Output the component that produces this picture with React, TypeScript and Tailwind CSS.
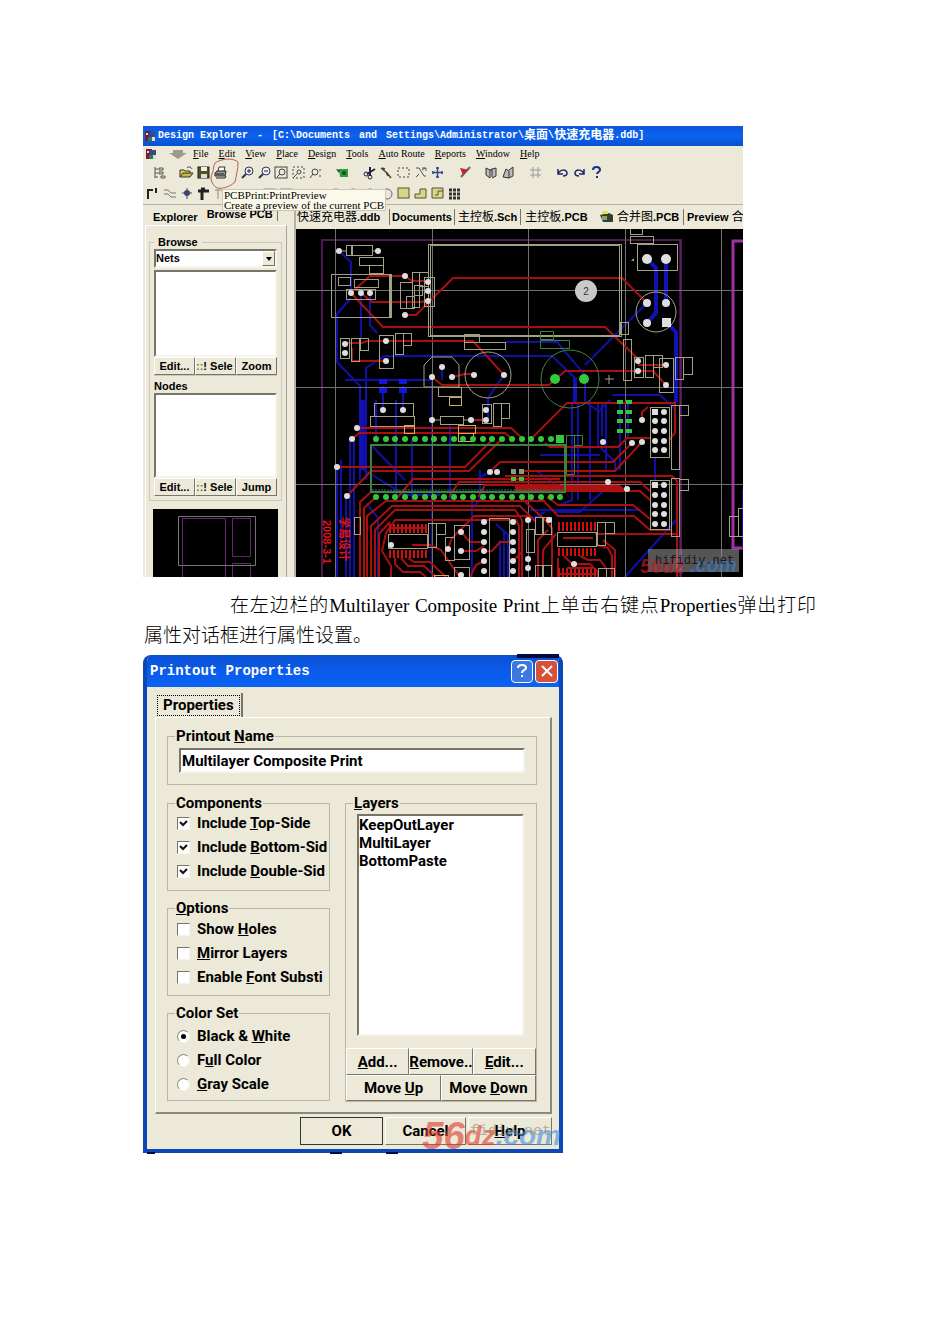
import { Fragment, useState } from 'react'
import type { ReactNode } from 'react'
import clsx from 'clsx'

type Point = [number, number]
type Box = [number, number, number, number]

const raised = 'border border-t-white border-l-white border-r-[#77756a] border-b-[#77756a] bg-[#ece9d8]'
const sunken = 'border-2 border-t-[#77756a] border-l-[#77756a] border-r-[#f6f4ec] border-b-[#f6f4ec] bg-white'

/* ---------- toolbar icons ---------- */

const icons: Record<string, ReactNode> = {
  tree: <path d="M3 2v11M3 4h3M3 8h3M3 12h3M7 3h4v2H7zM7 7h4v2H7zM9 11h4v2H9z" stroke="#555" fill="none" />,
  open: (
    <>
      <path d="M1 12V5h4l1 1h5v2" fill="#e0d060" stroke="#333" />
      <path d="M1 12l3-4h10l-3 4z" fill="#c8b840" stroke="#333" />
      <path d="M8 3c2-2 4-1 5 1" stroke="#333" fill="none" />
    </>
  ),
  save: (
    <>
      <rect x="2" y="2" width="11" height="11" fill="#55531c" stroke="#222" />
      <rect x="5" y="2" width="6" height="4" fill="#eee" />
      <rect x="5" y="9" width="6" height="4" fill="#ddd" />
    </>
  ),
  print: (
    <>
      <path d="M5 6l1-4h6l-1 4" fill="#fff" stroke="#333" />
      <path d="M2 8l2-2h9l-1 5H2z" fill="#999" stroke="#222" />
      <path d="M3 13h9l1-2M3 9h8" stroke="#222" fill="none" />
    </>
  ),
  zoomIn: (
    <>
      <circle cx="9" cy="6" r="4" fill="#eef" stroke="#335" />
      <path d="M6 9l-4 4" stroke="#335" strokeWidth="2" />
      <path d="M7 6h4M9 4v4" stroke="#223" />
    </>
  ),
  zoomOut: (
    <>
      <circle cx="9" cy="6" r="4" fill="#eef" stroke="#335" />
      <path d="M6 9l-4 4" stroke="#335" strokeWidth="2" />
      <path d="M7 6h4" stroke="#223" />
    </>
  ),
  zoomPage: (
    <>
      <rect x="1" y="2" width="12" height="11" fill="none" stroke="#444" />
      <circle cx="8" cy="7" r="3" fill="none" stroke="#444" />
      <path d="M6 9l-3 3" stroke="#444" />
    </>
  ),
  zoomArea: (
    <>
      <rect x="2" y="2" width="11" height="11" fill="none" stroke="#444" strokeDasharray="2 2" />
      <circle cx="8" cy="7" r="2" fill="none" stroke="#444" />
      <path d="M6 9l-4 4" stroke="#444" />
    </>
  ),
  zoomPoint: (
    <>
      <circle cx="7" cy="7" r="3" fill="none" stroke="#444" />
      <path d="M5 9l-3 4M12 4v2M12 10v2" stroke="#444" />
    </>
  ),
  chip: (
    <>
      <path d="M4 4h9v8H5z" fill="#2c9c3c" />
      <path d="M1 4l4 1-1 3z" fill="#124d18" />
      <circle cx="9" cy="8" r="2" fill="#124d18" />
    </>
  ),
  cut: (
    <>
      <path d="M13 4L5 9M8 2v9" stroke="#224" strokeWidth="2" />
      <circle cx="4" cy="9" r="2" fill="none" stroke="#224" />
      <circle cx="8" cy="12" r="2" fill="none" stroke="#224" />
    </>
  ),
  paste: <path d="M2 3l6 5 4 5M3 3l3 1M7 7l2 4" stroke="#443" strokeWidth="1.5" fill="none" />,
  select: <rect x="2" y="3" width="11" height="9" fill="none" stroke="#444" strokeDasharray="2 2" />,
  deselect: <path d="M3 3h3l5 8h2M3 12l3-3M9 5l3-2M9 3h4v3" stroke="#555" fill="none" />,
  move: <path d="M7.5 2v11M2 7.5h11M6 3h3M6 12h3M3 6v3M12 6v3" stroke="#35478f" strokeWidth="1.5" />,
  wizard: (
    <>
      <path d="M13 2L4 12" stroke="#666" strokeWidth="2" />
      <path d="M3 3l5 1 3 1-5 5z" fill="#c22" />
    </>
  ),
  library: <path d="M2 3l4 2v8L2 10zM6 5l2-1v8M8 4l4-1v8l-4 2" stroke="#333" fill="#bbb" />,
  books: <path d="M2 12l3-8 3 2v7zM8 5l4-3v9l-4 2" stroke="#333" fill="#bbb" />,
  grid: <path d="M5 2v11M10 2v11M2 5h11M2 10h11" stroke="#999" />,
  undo: <path d="M3 4v5h5M3 9c2-5 9-5 9-1 0 2-2 3-4 3" stroke="#226" strokeWidth="1.5" fill="none" />,
  redo: <path d="M12 4v5H7M12 9C10 4 3 4 3 8c0 2 2 3 4 3" stroke="#226" strokeWidth="1.5" fill="none" />,
  help: <path d="M4 5c0-4 7-4 7 0 0 2-3 2-3 4M8 11v2" stroke="#1c2c88" strokeWidth="2" fill="none" />,
  track: <path d="M3 13V4h5M11 2v5" stroke="#222" strokeWidth="2" fill="none" />,
  wave: <path d="M2 4h4l3 3h5M2 8h4l3 3h5" stroke="#777" fill="none" />,
  via: (
    <>
      <path d="M8 2v11M3 7h10" stroke="#446" />
      <circle cx="8" cy="7" r="3" fill="#3a4478" />
    </>
  ),
  pad: <path d="M2 5h11M6 5v9M5 3h4" stroke="#222" strokeWidth="3" />,
  text: <path d="M2 4h8M5 4v9" stroke="#888" />,
  line: <path d="M2 12L13 3" stroke="#888" />,
  box: <rect x="2" y="3" width="11" height="9" fill="none" stroke="#888" />,
  dots: <path d="M2 4h3M7 4h3M12 4h2M2 8h12" stroke="#888" />,
  arc: <circle cx="8" cy="8" r="5" fill="none" stroke="#667" />,
  fill: <rect x="2" y="2" width="11" height="10" fill="#d8d68c" stroke="#55532c" />,
  polygon: <path d="M2 12V8h5V3h6v9z" fill="#d8d68c" stroke="#55532c" />,
  plane: <path d="M2 2h11v10H2zM5 9h3V5h5" fill="#d8d68c" stroke="#55532c" />,
  array: <path d="M2 4h11M2 8h11M2 12h11" stroke="#333" strokeWidth="3" strokeDasharray="3 1" />,
}

const topRow = [
  ['tree'],
  ['open', 'save', 'print'],
  ['zoomIn', 'zoomOut', 'zoomPage', 'zoomArea', 'zoomPoint'],
  ['chip'],
  ['cut', 'paste', 'select', 'deselect', 'move'],
  ['wizard'],
  ['library', 'books'],
  ['grid'],
  ['undo', 'redo', 'help'],
]

const bottomRow = [
  ['track', 'wave', 'via', 'pad', 'text'],
  ['line', 'box', 'box'],
  ['dots', 'arc', 'arc', 'arc', 'arc', 'fill', 'polygon', 'plane', 'array'],
]

function ToolRow({ groups, className }: { groups: string[][]; className: string }) {
  return (
    <div className={clsx('flex items-center h-[21px]', className)}>
      {groups.map((group, i) => (
        <div key={i} className="flex">
          {group.map((name, j) => (
            <button key={j} type="button" aria-label={name} className="w-[17px] h-[17px] flex items-center justify-center">
              <svg viewBox="0 0 15 15" className="w-[15px] h-[15px]">
                {icons[name]}
              </svg>
            </button>
          ))}
        </div>
      ))}
    </div>
  )
}

/* ---------- board drawing ---------- */

const white: Point[] = [
  [339, 251], [378, 251], [351, 293], [361, 293], [370, 293], [405, 276], [405, 315],
  [428, 282], [428, 291], [428, 301], [345, 344], [345, 353], [386, 341], [386, 361],
  [442, 367], [432, 377], [452, 377], [474, 375], [504, 375], [638, 361], [638, 371],
  [666, 365], [666, 385], [383, 410], [403, 410], [432, 420], [471, 420], [486, 410],
  [486, 420], [357, 428], [352, 439], [337, 467], [347, 496], [490, 472], [497, 472],
  [603, 442], [632, 443], [642, 442], [642, 420], [608, 482], [627, 489], [391, 545],
  [461, 532], [461, 551], [448, 549], [461, 575], [528, 520], [549, 520], [528, 559],
  [528, 568], [574, 564],
  [484, 522], [484, 532], [484, 542], [484, 551], [484, 561], [484, 571],
  [513, 522], [513, 532], [513, 542], [513, 551], [513, 561], [513, 571],
  [664, 412], [655, 421], [664, 421], [655, 431], [664, 431], [655, 441], [664, 441], [655, 450], [664, 450],
  [664, 485], [655, 495], [664, 495], [655, 505], [664, 505], [655, 514], [664, 514], [655, 524], [664, 524],
]

const outlines: Box[] = [
  [346, 245, 26, 10], [351, 245, 1, 10], [359, 257, 24, 8], [369, 265, 14, 8], [331, 274, 60, 43],
  [389, 275, 1, 41], [338, 277, 12, 8], [354, 279, 24, 8], [346, 289, 29, 10], [400, 282, 12, 26],
  [412, 272, 7, 35], [419, 272, 9, 14], [406, 296, 8, 12], [414, 285, 8, 10], [424, 277, 10, 29],
  [428, 244, 193, 92], [430, 245, 189, 90], [340, 338, 9, 20], [351, 338, 8, 23], [360, 338, 8, 12],
  [379, 335, 14, 33], [395, 333, 8, 21], [403, 333, 8, 12], [464, 334, 15, 8], [464, 342, 41, 7],
  [438, 387, 23, 9], [637, 244, 40, 26], [630, 236, 23, 7], [630, 228, 12, 6], [620, 322, 8, 12],
  [623, 339, 8, 41], [634, 357, 9, 20], [645, 355, 8, 22], [653, 355, 9, 12], [659, 358, 14, 34],
  [675, 357, 8, 22], [683, 357, 9, 17], [374, 403, 39, 13], [370, 416, 44, 10], [440, 416, 23, 8],
  [482, 404, 9, 19], [493, 403, 8, 23], [501, 403, 8, 15], [650, 407, 19, 50], [671, 405, 8, 64],
  [679, 405, 9, 10], [650, 480, 19, 49], [671, 478, 8, 58], [679, 479, 9, 11], [388, 534, 39, 14],
  [428, 523, 8, 24], [436, 523, 9, 11], [454, 525, 15, 34], [445, 537, 9, 23], [454, 567, 15, 12],
  [489, 518, 20, 62], [354, 517, 6, 17], [557, 532, 39, 14], [597, 522, 8, 23], [605, 522, 9, 11],
  [535, 517, 7, 17], [543, 517, 8, 17], [526, 529, 8, 23], [535, 565, 7, 14], [543, 565, 8, 14],
  [598, 568, 8, 12], [606, 568, 8, 12], [729, 516, 9, 20], [738, 508, 8, 28],
]

const yellow: Box[] = [
  [449, 397, 12, 8], [404, 425, 10, 8], [458, 425, 17, 8], [458, 433, 15, 8], [434, 575, 14, 6],
]

const redTracks = [
  'M405 276H370L351 293', 'M405 276L412 281H424', 'M361 293L372 302H420L428 301',
  'M351 293L383 327H605L638 359', 'M405 315H416L453 278H622L647 303',
  'M345 343H362L367 341H473L504 375', 'M352 348V361H386', 'M452 377L465 374H474',
  'M432 377L442 385H549L565 371H653L666 385', 'M638 365H666', 'M471 420H486',
  'M357 428H511L524 440', 'M352 439L359 433H505L512 439', 'M337 467H465L492 440',
  'M347 496L371 471H469L500 441', 'M398 497L413 479H560', 'M449 497L459 482H560',
  'M478 497L485 485H560', 'M490 472L500 462H613L632 443', 'M521 471H615L642 442',
  'M533 437L567 403H675V433L669 440', 'M545 443L550 447H618L627 438H650', 'M642 420V412L648 407',
  'M505 476H672L677 481V577', 'M560 482H640L650 491', 'M627 491H640L650 500',
  'M547 497L558 505H633L650 519', 'M540 497L558 516H634L650 530H672', 'M520 497L545 520L552 528V577',
  'M595 534H678', 'M360 577V502L371 492H385', 'M364 577V508L376 497', 'M367 577V516L386 501H545',
  'M371 577V526L392 506H520L536 522', 'M375 577V530L395 510H515L522 520V577',
  'M379 577V534L390 522', 'M382 551L386 533L395 520H516L519 526V577',
  'M382 551L391 566V577', 'M395 558V564L403 572H420L426 577', 'M401 558L408 566H424L436 577',
  'M408 558L414 562H430L446 577', 'M412 545H430L441 550L452 566L460 577',
  'M448 549L452 538L474 516H530', 'M461 532L470 542H484', 'M461 551H476L484 546',
  'M484 551H492L500 542H513', 'M470 577L476 565L484 561', 'M513 561L522 552',
  'M538 577V540L548 530', 'M543 577V550L556 534', 'M558 558V577', 'M564 556L572 564H590L598 572V577',
  'M580 556L588 560H600L606 568', 'M597 545L608 548L612 556V577', 'M603 540L615 550V577',
]

const blueTracks = [
  'M339 251L351 262V293', 'M351 298L337 314V362L360 386V480', 'M370 293V325L377 333',
  'M361 293V338', 'M366 480V368L385 356H552L575 378V402', 'M505 342H557L585 375V402',
  'M345 380H432V577', 'M442 367V380', 'M504 375L488 398V420', 'M383 386V410', 'M403 386V410',
  'M376 400V440', 'M396 400V500', 'M412 440V500', 'M364 400V470L405 495H440', 'M337 467V577',
  'M341 460V540', 'M346 498V577', 'M350 440V577', 'M354 440V577', 'M366 503L378 518V577',
  'M450 425V500', 'M472 500V577', 'M480 470V500L470 510', 'M490 472L475 480', 'M500 540V577',
  'M504 530V577', 'M496 524L508 535V577', 'M647 303L585 365', 'M598 402V445L615 462V470',
  'M602 402V436', 'M606 402V470', 'M610 400L600 410', 'M612 395H660L676 410', 'M585 402L600 412',
  'M578 402V500', 'M572 402V500L560 505', 'M590 400V500', 'M620 402V470', 'M628 402V437',
  'M655 457V480', 'M610 485L580 512H555', 'M535 470L556 485H600', 'M676 520L625 577',
  'M540 455H600', 'M530 510H640', 'M545 512L530 520', 'M743 490V548', 'M371 445L405 480',
]

function teeth(x: number, y: number, count: number, length: number) {
  let d = ''
  for (let i = 0; i < count; i++) d += `M${x + i * 4} ${y}v${length}`
  return d
}

function Rects({ boxes, stroke }: { boxes: Box[]; stroke: string }) {
  return (
    <g fill="none" stroke={stroke}>
      {boxes.map(([x, y, w, h], i) => (
        <rect key={i} x={x + 0.5} y={y + 0.5} width={w} height={h} />
      ))}
    </g>
  )
}

function Board() {
  const pins = Array.from({ length: 20 }, (_, i) => Math.round(376 + i * 9.7))

  return (
    <svg viewBox="296 229 447 348" preserveAspectRatio="xMinYMin slice" role="img" aria-label="PCB" className="block w-full h-[348px] bg-black">
      {/* Board edges */}
      <path d="M322 577V240H681V577" fill="none" stroke="#4d1a50" strokeWidth="2" />
      <path d="M680 240V577" stroke="#7b2280" />
      <path d="M745 241H733V548H745" fill="none" stroke="#a02ea6" strokeWidth="3" />

      <g fill="none" stroke="#1010a8" strokeWidth="2">
        {blueTracks.map((d) => <path key={d} d={d} />)}
      </g>
      <g fill="none" stroke="#1212b4" strokeWidth="4">
        <path d="M647 259L656 268V313L647 323M666 259V303M666 322L676 332V402M575 378V402M361 400V470" />
      </g>
      <path d="M379 379h8v5h-8zM399 379h8v5h-8zM379 388h8v5h-8zM399 388h8v5h-8z" fill="#1515e0" />

      {/* Reference grid */}
      <path
        d="M335.500 229V577M432.500 229V577M528.500 229V577M625.500 229V577M721.500 229V577M296 290.500H743M296 387.500H743M296 484.500H743"
        stroke="#70706c"
      />

      <g fill="none" stroke="#a81010" strokeWidth="2">
        {redTracks.map((d) => <path key={d} d={d} />)}
      </g>
      <path d="M515 485H620L628 492H515z" fill="#b01010" />
      <g stroke="#d01010" strokeWidth="2">
        <path d={teeth(390, 524, 10, 9)} />
        <path d={teeth(390, 550, 10, 8)} />
        <path d={teeth(559, 522, 10, 9)} />
        <path d={teeth(559, 548, 10, 8)} />
        <path d={teeth(559, 568, 10, 9)} />
      </g>
      <path d="M390 528h36M567 568h26M560 574h34M563 538h30" stroke="#b01010" strokeWidth="2" />

      <Rects boxes={outlines} stroke="#a3a184" />
      <Rects boxes={yellow} stroke="#c8b060" />
      <g fill="none" stroke="#a3a184">
        <path d="M424 387V365L432 357H452L459 365V387z" />
        <circle cx="488" cy="375" r="23" />
        <circle cx="656" cy="312" r="20" />
        <path d="M339 251h7M372 251h6M432 420h8M463 420h8M605 379h9M609 375v9" />
      </g>

      {/* Main socket and its pins */}
      <g fill="none" stroke="#3f8240">
        <path d="M371 445H565V492H371z" strokeWidth="2" />
        <path d="M372 490H565" stroke="#2c7470" strokeDasharray="2 1" />
        <circle cx="570" cy="379" r="29" />
        <path d="M540.500 331.500h13v8h-13zM540.500 340.500h29v8h-29zM566.500 435.500h8v39h-8zM574.500 435.500h8v10h-8z" />
      </g>
      <g fill="#35c83c">
        {pins.map((x, i) => (
          <Fragment key={x}>
            {i < 19 && <circle cx={x} cy="439" r="3" />}
            <circle cx={x} cy="497" r="3" />
          </Fragment>
        ))}
        <rect x="556" y="435" width="8" height="8" />
        <circle cx="555" cy="379" r="5" />
        <circle cx="584" cy="379" r="5" />
        {[402, 412, 421, 431].map((y) => (
          <path key={y} d={`M617 ${y - 2}h6v4h-6zM626 ${y - 2}h6v4h-6z`} />
        ))}
        <path d="M511 477h5v4h-5zM519 477h5v4h-5z" />
      </g>
      <path d="M511 469h5v5h-5zM519 469h5v5h-5z" fill="#8d9a80" />

      <g fill="#dedede">
        {white.map(([x, y]) => <circle key={`${x}-${y}`} cx={x} cy={y} r="3" />)}
        <circle cx="647" cy="259" r="5" />
        <circle cx="666" cy="259" r="5" />
        <circle cx="647" cy="303" r="4" />
        <circle cx="666" cy="303" r="4" />
        <circle cx="647" cy="323" r="4" />
        <path d="M662 318h9v9h-9zM652 409h6v6h-6zM652 482h6v6h-6z" />
      </g>
      <path d="M634 258l-3 3h3z" fill="#a3a184" />

      <circle cx="586" cy="291" r="11" fill="#c9c9c9" />
      <text x="586" y="295" textAnchor="middle" fontSize="10" fontFamily="Liberation Sans, sans-serif" fill="#333">2</text>

      <g fill="#e01414" fontWeight="bold">
        <text transform="translate(323 520) rotate(90)" fontSize="11" fontFamily="Liberation Sans, sans-serif">2008-3-1</text>
        <text transform="translate(340 517) rotate(90)" fontSize="11" fontFamily="Noto Sans CJK SC, sans-serif">学易设计</text>
      </g>

      {/* Site mark */}
      <rect x="648" y="549" width="91" height="23" fill="#9a9a9a" fillOpacity="0.55" />
      <g fontFamily="Liberation Sans, sans-serif" fontWeight="bold" fontStyle="italic" fontSize="20">
        <text x="640" y="573" fill="#c01c24" fillOpacity="0.7">56dz</text>
        <text x="690" y="572" fill="#3a78c0" fillOpacity="0.8">.com</text>
      </g>
      <text x="655" y="564" fontFamily="Liberation Mono, monospace" fontSize="12" fill="#181818">hifidiy.net</text>
    </svg>
  )
}

/* ---------- explorer window ---------- */

const menus = [
  ['F', 'ile'], ['E', 'dit'], ['V', 'iew'], ['P', 'lace'], ['D', 'esign'], ['T', 'ools'],
  ['A', 'uto Route'], ['R', 'eports'], ['W', 'indow'], ['H', 'elp'],
]

function AppMark() {
  return (
    <svg viewBox="0 0 12 12" className="w-3 h-3 shrink-0">
      <path d="M1 1h6v10H1z" fill="#7c1c34" />
      <path d="M5 2h6v5H5z" fill="#334a88" />
      <path d="M4 7h4v4H4z" fill="#2f7a4c" />
      <path d="M8 7h3v4H8zM2 3h2v2H2z" fill="#d8d8d8" />
    </svg>
  )
}

function ListButtons({ last }: { last: string }) {
  return (
    <div className="grid grid-cols-3 h-[18px] text-[11px] font-bold">
      <button type="button" className={raised}>Edit...</button>
      <button type="button" className={clsx(raised, 'flex items-center overflow-hidden whitespace-nowrap')}>
        <span className="text-[#6b7a20]">::</span>! Sele
      </button>
      <button type="button" className={raised}>{last}</button>
    </div>
  )
}

function BrowsePanel() {
  const [mode, setMode] = useState('Nets')

  return (
    <div className="w-[153px] shrink-0 flex flex-col pl-[2px] border-r-2 border-r-[#b5b2a4]">
      <div className="flex items-start h-5 pt-[2px] text-[11px] leading-[14px] font-bold">
        <button type="button" className="pl-2 pr-[5px] pt-[3px]">Explorer</button>
        <button type="button" className="px-1 border-r border-[#77756a]">Browse PCB</button>
      </div>
      <div className="flex-1 flex flex-col mr-[7px] pl-[3px] pr-1 border border-b-0 border-t-white border-l-white border-r-[#a5a294]">
        <fieldset className="border border-[#cbc8b8] mt-[10px] px-1 pb-1 min-w-0 text-[11px] leading-[13px] font-bold">
          <legend className="px-1">Browse</legend>
          <div className={clsx(sunken, 'grid h-[19px]')}>
            <select
              aria-label="Browse"
              value={mode}
              onChange={(e) => setMode(e.target.value)}
              className="col-start-1 row-start-1 appearance-none outline-none"
            >
              <option>Nets</option>
            </select>
            <span className={clsx(raised, 'col-start-1 row-start-1 justify-self-end w-[13px] flex items-center justify-center pointer-events-none')}>
              <svg viewBox="0 0 6 4" className="w-[6px] h-1"><path d="M0 0h6L3 4z" /></svg>
            </span>
          </div>
          <select multiple aria-label="Nets" className={clsx(sunken, 'block w-full h-[87px] mt-[2px] outline-none')} />
          <ListButtons last="Zoom" />
          <label htmlFor="nodes" className="block pt-1 border-t border-[#cbc8b8]">Nodes</label>
          <select id="nodes" multiple className={clsx(sunken, 'block w-full h-[85px] outline-none')} />
          <ListButtons last="Jump" />
        </fieldset>
        <svg viewBox="153 509 125 68" preserveAspectRatio="xMinYMin slice" className="w-[125px] h-[68px] ml-1 mt-2 bg-black">
          <path d="M182.500 577V518.500H225.500V577M232.500 518.500h18v38h-18zM232.500 577V563.500H250.500V577" fill="none" stroke="#6a2470" />
          <path d="M178.500 516.500h77v49h-77z" fill="none" stroke="#77757a" />
        </svg>
      </div>
    </div>
  )
}

function ExplorerWindow() {
  return (
    <section className="relative max-w-[600px] overflow-hidden bg-[#ece9d8] text-black font-['Liberation_Sans','Noto_Sans_CJK_SC',sans-serif]">
      <header className="h-5 flex items-center gap-[9px] pl-px bg-linear-to-b from-[#0b55dc] via-[#0b63f0] to-[#0850d0] text-white font-bold text-[10px] leading-5 whitespace-nowrap font-['Liberation_Mono','Noto_Sans_CJK_SC',monospace]">
        <span className="flex items-center gap-[2px]"><AppMark /> Design Explorer</span>
        <span>-</span>
        <span>[C:\Documents</span>
        <span>and</span>
        <span className="flex">
          Settings\Administrator\<span className="text-[12px]">桌面</span>\<span className="text-[12px]">快速充电器</span>.ddb]
        </span>
      </header>

      <nav className="h-4 flex items-center gap-[10px] pl-[2px] text-[10px] leading-4 font-['Liberation_Serif',serif]">
        <AppMark />
        <svg viewBox="0 0 18 10" className="w-[18px] h-[10px] ml-[2px] -mr-1">
          <path d="M0 4h4V1h10v3h4l-9 6z" fill="#9b9a90" />
        </svg>
        {menus.map(([key, rest]) => (
          <button key={key} type="button"><u>{key}</u>{rest}</button>
        ))}
      </nav>

      <ToolRow groups={topRow} className="pl-2 gap-[10px]" />
      <ToolRow groups={bottomRow} className="pl-px gap-[15px]" />

      <div className="flex border-t border-[#b5b2a4]">
        <BrowsePanel />
        <div className="flex-1 min-w-0">
          <div className="flex items-center h-6 text-[11px] leading-4 font-bold whitespace-nowrap overflow-hidden">
            <button type="button" className="w-[94px] shrink-0 border-r border-[#77756a] text-left pl-px">
              <span className="text-[12px] font-normal">快速充电器</span>.ddb
            </button>
            <button type="button" className="w-[65px] shrink-0 border-r border-[#77756a]">Documents</button>
            <button type="button" className="w-[66px] shrink-0 border-r border-[#77756a]">
              <span className="text-[12px] font-normal">主控板</span>.Sch
            </button>
            <button type="button" className="w-[71px] shrink-0">
              <span className="text-[12px] font-normal">主控板</span>.PCB
            </button>
            <button type="button" className="w-[92px] shrink-0 border-r border-[#77756a] flex items-center gap-1 pl-2">
              <svg viewBox="0 0 13 12" className="w-[13px] h-3">
                <path d="M0 4l9-2 4 2v7H3z" fill="#33402c" />
                <path d="M2 5h5v4H2z" fill="#88a070" />
                <path d="M2 0h6v3H2z" fill="#e6e060" />
              </svg>
              <span><span className="text-[12px] font-normal">合并图</span>.PCB</span>
            </button>
            <button type="button" className="shrink-0 pl-[3px]">
              Preview <span className="text-[12px] font-normal">合</span>
            </button>
          </div>
          <Board />
        </div>
      </div>

      {/* Tooltip and hand-drawn mark over the print button */}
      <div role="tooltip" className="absolute left-[79px] top-[63px] px-px bg-[#fbfaea] border border-[#c9c7b4] text-[11px] leading-[10px] whitespace-nowrap font-['Liberation_Serif',serif]">
        <p>PCBPrint:PrintPreview</p>
        <p>Create a preview of the current PCB</p>
      </div>
      <svg viewBox="0 0 30 34" className="absolute left-[67px] top-[31px] w-[30px] h-[34px] pointer-events-none">
        <path d="M5 6C12 1 24 1 28 5c0 8-2 14-3 20-5 5-13 7-18 6C1 27 0 21 2 17c2-4 1-8 3-11z" fill="none" stroke="#b5624c" />
      </svg>
    </section>
  )
}

/* ---------- printout dialog ---------- */

function Group({ legend, className, children }: { legend: ReactNode; className?: string; children: ReactNode }) {
  return (
    <fieldset className="min-w-0 border border-[#b9b6a6]">
      <legend className="ml-[7px] px-px leading-[14px]">{legend}</legend>
      <div className={className}>{children}</div>
    </fieldset>
  )
}

function CheckRow({ checked, children }: { checked?: boolean; children: ReactNode }) {
  return (
    <label className="flex items-center gap-[7px] h-6 whitespace-nowrap">
      <span className="grid shrink-0">
        <input
          type="checkbox"
          defaultChecked={checked}
          className="peer col-start-1 row-start-1 appearance-none w-[13px] h-[13px] bg-white border border-t-[#77756a] border-l-[#77756a] border-r-[#f6f4ec] border-b-[#f6f4ec]"
        />
        <svg viewBox="0 0 13 13" className="col-start-1 row-start-1 w-[13px] h-[13px] pointer-events-none invisible peer-checked:visible">
          <path d="M3 5l3 3 4-4" fill="none" stroke="#111" strokeWidth="2" />
        </svg>
      </span>
      <span>{children}</span>
    </label>
  )
}

function RadioRow({ checked, children }: { checked?: boolean; children: ReactNode }) {
  return (
    <label className="flex items-center gap-[7px] h-6 whitespace-nowrap">
      <span className="grid shrink-0">
        <input
          type="radio"
          name="color-set"
          defaultChecked={checked}
          className="peer col-start-1 row-start-1 appearance-none w-[13px] h-[13px] rounded-full bg-white border border-t-[#8b897c] border-l-[#8b897c] border-r-[#f6f4ec] border-b-[#f6f4ec]"
        />
        <span className="col-start-1 row-start-1 place-self-center w-[5px] h-[5px] rounded-full bg-black invisible peer-checked:visible" />
      </span>
      <span>{children}</span>
    </label>
  )
}

function PushButton({ className, children }: { className?: string; children: ReactNode }) {
  return (
    <button type="button" className={clsx(raised, 'flex items-center justify-center overflow-hidden whitespace-nowrap', className)}>
      <span>{children}</span>
    </button>
  )
}

function PrintoutDialog() {
  return (
    <section className="relative max-w-[420px]">
      <div className="flex justify-end h-1 pr-1"><span className="w-[42px] bg-[#050a3c]" /></div>
      <div className="-mt-[3px] rounded-t-lg overflow-hidden border-4 border-t-0 border-[#0c47b8] bg-[#ece9d8] text-black text-[15px] leading-4 font-bold font-['Roboto','Liberation_Sans',sans-serif]">
        <header className="h-8 -mx-1 pl-[7px] pr-[5px] flex items-center justify-between bg-linear-to-b from-[#0a4fd0] via-[#0a5cec] to-[#0a62f4] text-white">
          <h2 className="text-[14px] font-['Liberation_Mono',monospace]">Printout Properties</h2>
          <div className="flex gap-[2px]">
            <button type="button" aria-label="Help" className="w-[22px] h-[23px] rounded-sm border border-white bg-[#3c78e0] flex items-center justify-center">
              <svg viewBox="0 0 14 14" className="w-[14px] h-[14px]">
                <path d="M3 4c0-4 8-4 8 0 0 2-4 2-4 5M7 11v2" stroke="#fff" strokeWidth="2" fill="none" />
              </svg>
            </button>
            <button type="button" aria-label="Close" className="w-[23px] h-[23px] rounded-sm border border-white bg-[#d85038] flex items-center justify-center">
              <svg viewBox="0 0 14 14" className="w-[14px] h-[14px]">
                <path d="M2 2l10 10M12 2L2 12" stroke="#fff" strokeWidth="2" />
              </svg>
            </button>
          </div>
        </header>

        <div className="pt-[6px] pl-2 pr-[7px] pb-1">
          <div role="tablist" className="flex h-6">
            <button type="button" role="tab" aria-selected="true" className="ml-[2px] pr-px border-r-2 border-[#77756a]">
              <span className="block px-[5px] pt-px pb-[2px] border border-dotted border-black">Properties</span>
            </button>
          </div>

          <div className="border border-t-white border-l-white border-r-2 border-b-2 border-r-[#8b897c] border-b-[#8b897c] pt-[11px] pl-[11px] pr-[13px] pb-[10px]">
            <Group legend={<label htmlFor="printout-name">Printout <u>N</u>ame</label>} className="px-[11px] pt-[5px] pb-[11px]">
              <input id="printout-name" type="text" defaultValue="Multilayer Composite Print" className={clsx(sunken, 'block w-full h-[25px] px-px outline-none')} />
            </Group>

            <div className="flex mt-[11px] gap-[15px]">
              <div className="w-[163px] shrink-0 flex flex-col gap-[10px]">
                <Group legend="Components" className="pl-[9px] pt-px pb-[7px]">
                  <CheckRow checked>Include <u>T</u>op-Side</CheckRow>
                  <CheckRow checked>Include <u>B</u>ottom-Sid</CheckRow>
                  <CheckRow checked>Include <u>D</u>ouble-Sid</CheckRow>
                </Group>
                <Group legend={<><u>O</u>ptions</>} className="pl-[9px] pt-[2px] pb-[6px]">
                  <CheckRow>Show <u>H</u>oles</CheckRow>
                  <CheckRow><u>M</u>irror Layers</CheckRow>
                  <CheckRow>Enable <u>F</u>ont Substi</CheckRow>
                </Group>
                <Group legend="Color Set" className="pl-[9px] pt-1 pb-1">
                  <RadioRow checked>Black &amp; <u>W</u>hite</RadioRow>
                  <RadioRow>F<u>u</u>ll Color</RadioRow>
                  <RadioRow><u>G</u>ray Scale</RadioRow>
                </Group>
              </div>

              <div className="flex-1 min-w-0">
                <Group legend={<label htmlFor="layers"><u>L</u>ayers</label>}>
                  <div className="pl-[11px] pr-3 pt-1">
                    <select id="layers" multiple className={clsx(sunken, 'block w-full h-[222px] overflow-hidden outline-none')}>
                      <option className="font-bold">KeepOutLayer</option>
                      <option className="font-bold">MultiLayer</option>
                      <option className="font-bold">BottomPaste</option>
                    </select>
                  </div>
                  <div className="grid grid-cols-3 h-[27px] mt-3">
                    <PushButton><u>A</u>dd...</PushButton>
                    <PushButton><u>R</u>emove..</PushButton>
                    <PushButton><u>E</u>dit...</PushButton>
                  </div>
                  <div className="grid grid-cols-2 h-[26px]">
                    <PushButton>Move <u>U</u>p</PushButton>
                    <PushButton>Move <u>D</u>own</PushButton>
                  </div>
                </Group>
              </div>
            </div>
          </div>

          <div className="flex justify-end gap-[2px] mt-[3px] h-7">
            <PushButton className="w-[83px] outline outline-[#333] -outline-offset-1">OK</PushButton>
            <PushButton className="w-[81px]">Cancel</PushButton>
            <PushButton className="w-[84px]"><u>H</u>elp</PushButton>
          </div>
        </div>
      </div>
      <div className="flex h-[2px] -mt-px pl-1 text-[#050a3c]">
        <span className="w-2 bg-current" />
        <span className="w-3 ml-[175px] bg-current" />
        <span className="w-3 ml-11 bg-current" />
      </div>

      <p aria-hidden="true" className="absolute right-[2px] bottom-[2px] flex items-end font-bold italic leading-8 opacity-60 pointer-events-none font-['Liberation_Sans',sans-serif]">
        <span className="text-[38px] text-[#e0392c]">56</span>
        <span className="text-[28px] text-[#e0392c]">dz</span>
        <span className="text-[28px] text-[#3f8fdc]">.com</span>
      </p>
      <p aria-hidden="true" className="absolute right-3 bottom-[14px] text-[15px] leading-4 text-[#8b897c] opacity-60 pointer-events-none font-['Liberation_Mono',monospace]">
        fidiy.net
      </p>
    </section>
  )
}

export default function App() {
  return (
    <main className="min-h-screen bg-white pt-[126px] pb-24 pl-[143px] pr-[134px]">
      <ExplorerWindow />
      <p className="pl-px mt-[14px] mb-[3px] indent-[86px] text-justify text-[19px] leading-[30px] font-light text-black font-['Liberation_Serif','Noto_Sans_CJK_SC',serif]">
        在左边栏的Multilayer Composite Print上单击右键点Properties弹出打印属性对话框进行属性设置。
      </p>
      <PrintoutDialog />
    </main>
  )
}
